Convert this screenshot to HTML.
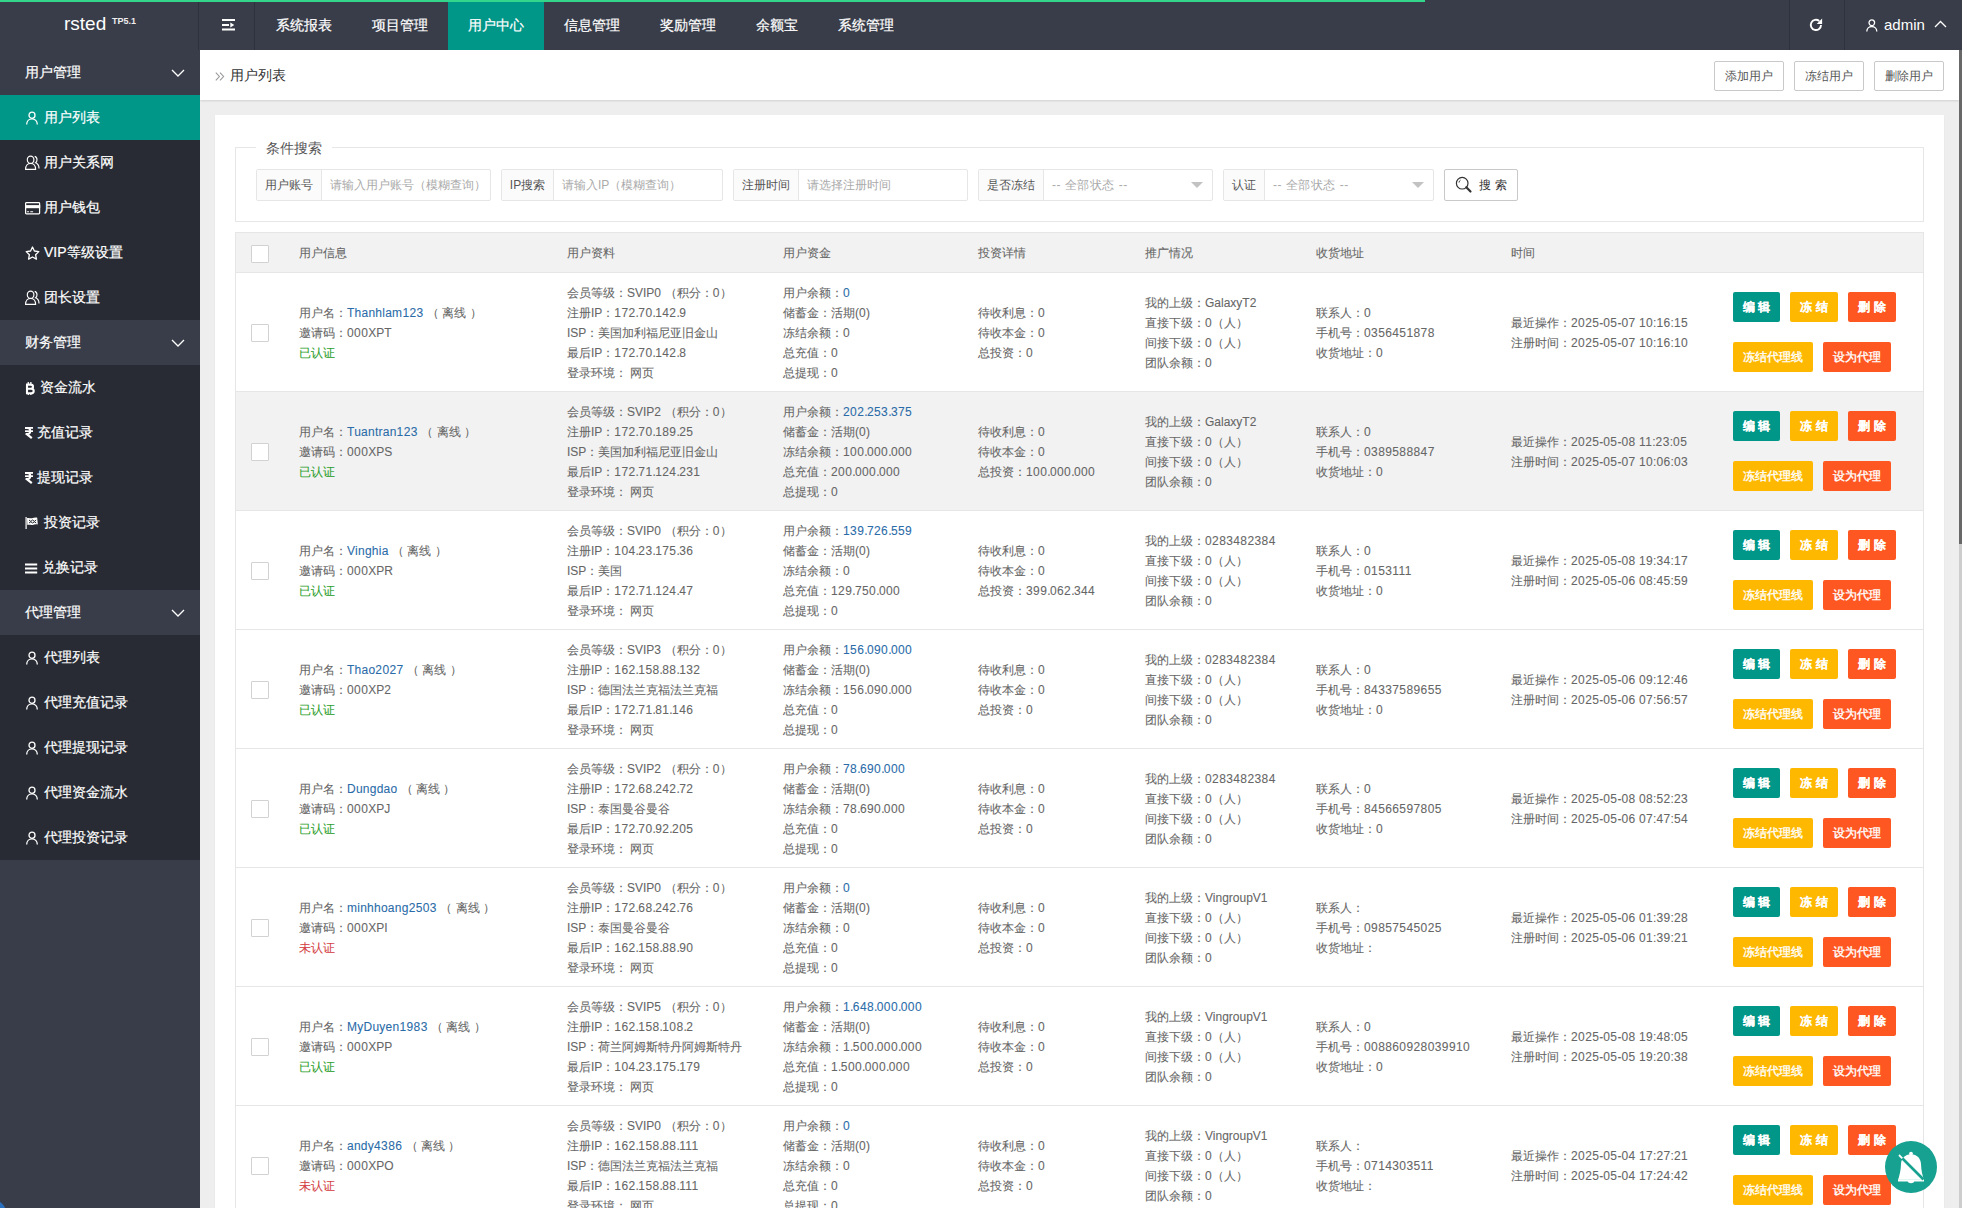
<!DOCTYPE html><html><head><meta charset="utf-8"><style>
*{margin:0;padding:0;box-sizing:border-box}
html,body{width:1962px;height:1208px;overflow:hidden;background:#eeeeee;font-family:"Liberation Sans",sans-serif;}
.side,.nav{-webkit-text-stroke:0.2px currentColor}
td,th{-webkit-text-stroke:0.08px currentColor}
.hd{position:absolute;left:0;top:0;width:1962px;height:50px;background:#393D49;}
.prog{position:absolute;left:0;top:0;width:1425px;height:2px;background:#34d68b;z-index:5}
.logo{position:absolute;left:0;top:0;width:199px;height:50px;border-right:1px solid #2f323c;color:#fff;}
.logo .t{position:absolute;left:64px;top:13px;font-size:19px;letter-spacing:0px;font-family:"Liberation Sans",sans-serif}
.logo sup{position:absolute;left:112px;top:16px;font-size:9px;font-weight:bold;color:#eee}
.menu{position:absolute;left:200px;top:0;width:55px;height:50px;border-right:1px solid #2f323c}
.menu svg{position:absolute;left:22px;top:19px}
.nav{position:absolute;left:256px;top:0;height:50px;}
.nav span{float:left;height:50px;line-height:50px;padding:0 20px;color:#fff;font-size:14px}
.nav span.on{background:#009688}
.hr1{position:absolute;left:1789px;top:0;width:56px;height:50px;border-left:1px solid #2f323c;border-right:1px solid #2f323c}
.hr1 svg{position:absolute;left:19px;top:18px}
.adm{position:absolute;left:1866px;top:0;height:50px;color:#fff;font-size:15px;line-height:50px}
.adm svg.u{position:absolute;left:0;top:18.5px}
.adm .n{position:absolute;left:18px;top:0}
.adm svg.c{position:absolute;left:68px;top:20px}
.side{position:absolute;left:0;top:50px;width:200px;height:1158px;background:#393D49}
.sg{position:relative;height:45px;line-height:45px;background:#393D49;color:#fff;font-size:14px;padding-left:25px}
.sg .chev{position:absolute;left:171px;top:19px}
.si{position:relative;height:45px;line-height:45px;background:#282B33;color:#fff;font-size:14px;}
.si.act{background:#009688}
.si .ic{position:absolute;left:25px;top:15px}
.si .gly{top:0;left:25px;line-height:45px;color:#fff}
.si .st{position:absolute;left:44px;top:0}
.main{position:absolute;left:200px;top:50px;width:1759px;height:1158px;background:#eeeeee;overflow:hidden}
.sub{position:absolute;left:0;top:0;width:1759px;height:50px;background:#fff;box-shadow:0 1px 2px rgba(0,0,0,.12)}
.crumb{position:absolute;left:30px;top:0;line-height:50px;font-size:14px;color:#333}
.crumb i{font-style:normal;color:#999;font-size:13px;margin-right:3px}
.tb{position:absolute;top:11px;height:30px;width:70px;border:1px solid #c9c9c9;border-radius:2px;background:#fff;color:#555;font-size:12px;line-height:28px;text-align:center}
.card{position:absolute;left:15px;top:65px;width:1729px;height:1200px;background:#fff;box-shadow:0 1px 2px rgba(0,0,0,.05)}
.fs{position:absolute;left:20px;top:32px;width:1689px;height:75px;border:1px solid #e6e6e6;border-bottom:1px solid #e6e6e6}
.lg{position:absolute;left:20px;top:-10px;padding:0 10px;background:#fff;font-size:14px;color:#555;line-height:20px}
.grp{position:absolute;top:21px;height:32px;border:1px solid #e6e6e6;border-radius:2px;background:#fff}
.grp .l{position:absolute;left:0;top:0;height:30px;line-height:30px;background:#fbfbfb;border-right:1px solid #e6e6e6;color:#555;font-size:12px;text-align:center}
.grp .p{position:absolute;top:0;height:30px;line-height:30px;color:#aaa;font-size:12px}
.grp .p.sl{letter-spacing:0.5px}
.grp .tri{position:absolute;top:12px;width:0;height:0;border-left:6px solid transparent;border-right:6px solid transparent;border-top:6px solid #c2c2c2}
.sbtn{position:absolute;top:21px;left:1208px;width:74px;height:32px;border:1px solid #c9c9c9;border-radius:2px;background:#fff}
.sbtn svg{position:absolute;left:10px;top:6px}
.sbtn span{position:absolute;left:34px;top:0;line-height:30px;font-size:12px;color:#333;letter-spacing:4px}
table{position:absolute;left:20px;top:117px;width:1689px;border-collapse:separate;border-spacing:0;table-layout:fixed;border:1px solid #e6e6e6;font-size:12px;color:#666}
th{height:40px;background:#f2f2f2;text-align:left;font-weight:normal;color:#666;padding:1px 15px 0;border-bottom:1px solid #e6e6e6}
td{height:119px;padding:10px 15px 8px;line-height:20px;border-bottom:1px solid #e6e6e6;vertical-align:middle;white-space:nowrap;overflow:visible}
tr.hv td{background:#f2f2f2}
td.c0,td.c8{padding:9px 15px}
.cb{display:block;position:relative;top:1px;width:18px;height:18px;border:1px solid #d2d2d2;border-radius:1px;background:#fff}
.lk{color:#2a6ba8}
.d{letter-spacing:0.4px}
.dt{letter-spacing:-0.6px}
.nm{letter-spacing:0.25px}
.ok{color:#2b9e2b}
.no{color:#d43f45}
.b{display:inline-block;height:30px;line-height:31px;padding:0 10px;color:#fff;font-size:12px;border-radius:2px;margin-right:10px;vertical-align:top}
.bb{font-weight:bold;padding:0;text-align:center}
.bg{background:#009688}.by{background:#FFB800}.bd{background:#FF5722}
.br1{height:30px}
.br2{height:30px;margin-top:20px}
.br2 .b{-webkit-text-stroke:0.35px #fff}
.sb{position:absolute;left:1959px;top:50px;width:3px;height:1158px;background:#cdcdcd}
.sbt{position:absolute;left:1959px;top:50px;width:3px;height:494px;background:#686868}
.fab{position:absolute;left:1885px;top:1141px;width:52px;height:52px;border-radius:50%;background:#16a190}
</style></head><body>
<div class="hd">
<div class="logo"><span class="t">rsted</span><sup>TP5.1</sup></div>
<div class="menu"><svg width="13" height="12" viewBox="0 0 13 12"><rect x="0" y="0" width="13" height="2" fill="#fff"/><rect x="0" y="5" width="7" height="2" fill="#fff"/><path d="M8.3 3.6l4 2.4-4 2.4z" fill="#fff"/><rect x="0" y="9.5" width="13" height="2" fill="#fff"/></svg></div>
<div class="nav"><span>系统报表</span><span>项目管理</span><span class="on">用户中心</span><span>信息管理</span><span>奖励管理</span><span>余额宝</span><span>系统管理</span></div>
<div class="hr1"><svg width="15" height="15" viewBox="0 0 15 15"><path d="M12 6.9A5.1 5.1 0 1 1 10.2 3" fill="none" stroke="#fff" stroke-width="1.9"/><path d="M13.1 0.6V5.9H7.7z" fill="#fff"/></svg></div>
<div class="adm"><svg class="u" width="12" height="13" viewBox="0 0 12 13"><ellipse cx="5.8" cy="3.8" rx="2.8" ry="2.9" fill="none" stroke="#fff" stroke-width="1.3"/><path d="M0.8 12.6c0-3 2.2-5.1 5-5.1s5 2.1 5 5.1" fill="none" stroke="#fff" stroke-width="1.3"/></svg><span class="n">admin</span><svg class="c" width="13" height="8" viewBox="0 0 13 8"><path d="M1 7l5.5-5.5L12 7" fill="none" stroke="#fff" stroke-width="1.3"/></svg></div>
<div class="prog"></div>
</div>
<div class="side"><div class="sg">用户管理<svg class="chev" width="14" height="8" viewBox="0 0 14 8"><path d="M1 1l6 6 6-6" fill="none" stroke="#fff" stroke-width="1.3"/></svg></div>
<div class="si act"><svg class="ic" style="top:16px" width="14" height="14" viewBox="0 0 14 14"><ellipse cx="7" cy="4.2" rx="3" ry="3.1" fill="none" stroke="#fff" stroke-width="1.3"/><path d="M1.7 13.4c0-3.3 2.3-5.6 5.3-5.6s5.3 2.3 5.3 5.6" fill="none" stroke="#fff" stroke-width="1.3"/></svg><span class="st" style="left:44px">用户列表</span></div>
<div class="si"><svg class="ic" style="top:15px" width="15" height="15" viewBox="0 0 15 15"><ellipse cx="5.6" cy="4.8" rx="3.3" ry="3.7" fill="none" stroke="#fff" stroke-width="1.15"/><path d="M0.6 14.3c0-3.6 2.2-6 5-6s5 2.4 5 6z" fill="none" stroke="#fff" stroke-width="1.15"/><path d="M9.7 1.4c1.4.4 2.3 1.8 2.3 3.4 0 1.3-.5 2.4-1.4 3 1.9.8 3.4 3 3.4 5.6" fill="none" stroke="#fff" stroke-width="1.15"/></svg><span class="st" style="left:44px">用户关系网</span></div>
<div class="si"><svg class="ic" style="top:16.5px" width="16" height="13" viewBox="0 0 16 13"><rect x="0.6" y="0.6" width="14" height="11.2" rx="0.8" fill="none" stroke="#fff" stroke-width="1.25"/><rect x="0" y="3.1" width="15.2" height="3.1" fill="#fff"/><rect x="1.9" y="9.2" width="2.2" height="1.1" rx="0.5" fill="#fff"/><rect x="5.1" y="9.2" width="3.1" height="1.1" rx="0.5" fill="#fff"/></svg><span class="st" style="left:44px">用户钱包</span></div>
<div class="si"><svg class="ic" style="top:15.5px" width="15" height="14" viewBox="0 0 15 14"><path d="M7.5 1l1.9 4 4.4.6-3.2 3.1.8 4.4-3.9-2.1-3.9 2.1.8-4.4L1.2 5.6l4.4-.6z" fill="none" stroke="#fff" stroke-width="1.3" stroke-linejoin="round"/></svg><span class="st" style="left:44px">VIP等级设置</span></div>
<div class="si"><svg class="ic" style="top:15px" width="15" height="15" viewBox="0 0 15 15"><ellipse cx="5.6" cy="4.8" rx="3.3" ry="3.7" fill="none" stroke="#fff" stroke-width="1.15"/><path d="M0.6 14.3c0-3.6 2.2-6 5-6s5 2.4 5 6z" fill="none" stroke="#fff" stroke-width="1.15"/><path d="M9.7 1.4c1.4.4 2.3 1.8 2.3 3.4 0 1.3-.5 2.4-1.4 3 1.9.8 3.4 3 3.4 5.6" fill="none" stroke="#fff" stroke-width="1.15"/></svg><span class="st" style="left:44px">团长设置</span></div>
<div class="sg">财务管理<svg class="chev" width="14" height="8" viewBox="0 0 14 8"><path d="M1 1l6 6 6-6" fill="none" stroke="#fff" stroke-width="1.3"/></svg></div>
<div class="si"><svg class="ic" style="top:16.5px" width="11" height="14" viewBox="0 0 11 14"><path d="M2 2.6v8.8M1 2.6h4.6c1.5 0 2.4.9 2.4 2.1s-.9 2.1-2.4 2.1H2M2 6.8h4c1.7 0 2.7.9 2.7 2.2s-1 2.3-2.7 2.3H1" fill="none" stroke="#fff" stroke-width="2.1"/><rect x="2.6" y="0" width="1.3" height="2" fill="#fff"/><rect x="5.2" y="0" width="1.3" height="2" fill="#fff"/><rect x="2.6" y="11" width="1.3" height="2" fill="#fff"/><rect x="5.2" y="11" width="1.3" height="2" fill="#fff"/></svg><span class="st" style="left:40px">资金流水</span></div>
<div class="si"><svg class="ic" style="top:17px" width="9" height="12" viewBox="0 0 9 12"><rect x="0" y="0" width="8" height="1.8" fill="#fff"/><rect x="0" y="3.3" width="8" height="1.7" fill="#fff"/><path d="M0 1h2.3c1.9 0 3 1.1 3 2.9s-1.1 3-3 3H0.6" fill="none" stroke="#fff" stroke-width="1.9"/><path d="M1.2 6.6l5.6 4.5" stroke="#fff" stroke-width="2.2"/></svg><span class="st" style="left:37px">充值记录</span></div>
<div class="si"><svg class="ic" style="top:17px" width="9" height="12" viewBox="0 0 9 12"><rect x="0" y="0" width="8" height="1.8" fill="#fff"/><rect x="0" y="3.3" width="8" height="1.7" fill="#fff"/><path d="M0 1h2.3c1.9 0 3 1.1 3 2.9s-1.1 3-3 3H0.6" fill="none" stroke="#fff" stroke-width="1.9"/><path d="M1.2 6.6l5.6 4.5" stroke="#fff" stroke-width="2.2"/></svg><span class="st" style="left:37px">提现记录</span></div>
<div class="si"><svg class="ic" style="top:16.5px" width="15" height="13" viewBox="0 0 15 13"><rect x="0.5" y="0" width="1.2" height="12" fill="#fff"/><path d="M2 1.2c1.6-.8 3.3.3 5 0s3.4-.9 5.2-.4l.6 6.8c-1.8-.5-3.5-.1-5.2.3s-3.4-.6-5.2.2z" fill="#fff"/><path d="M4 3l1.8 1.4L7.6 3l1.8 1.4L11.2 3M4 6l1.8-1.2L7.6 6l1.8-1.2L11.2 6" stroke="#282B33" stroke-width="1" fill="none"/></svg><span class="st" style="left:44px">投资记录</span></div>
<div class="si"><svg class="ic" style="top:17.5px" width="13" height="11" viewBox="0 0 13 11"><rect x="0" y="0.5" width="12.2" height="2" fill="#fff"/><rect x="0" y="4.5" width="12.2" height="2" fill="#fff"/><rect x="0" y="8.5" width="12.2" height="2" fill="#fff"/></svg><span class="st" style="left:42px">兑换记录</span></div>
<div class="sg">代理管理<svg class="chev" width="14" height="8" viewBox="0 0 14 8"><path d="M1 1l6 6 6-6" fill="none" stroke="#fff" stroke-width="1.3"/></svg></div>
<div class="si"><svg class="ic" style="top:16px" width="14" height="14" viewBox="0 0 14 14"><ellipse cx="7" cy="4.2" rx="3" ry="3.1" fill="none" stroke="#fff" stroke-width="1.3"/><path d="M1.7 13.4c0-3.3 2.3-5.6 5.3-5.6s5.3 2.3 5.3 5.6" fill="none" stroke="#fff" stroke-width="1.3"/></svg><span class="st" style="left:44px">代理列表</span></div>
<div class="si"><svg class="ic" style="top:16px" width="14" height="14" viewBox="0 0 14 14"><ellipse cx="7" cy="4.2" rx="3" ry="3.1" fill="none" stroke="#fff" stroke-width="1.3"/><path d="M1.7 13.4c0-3.3 2.3-5.6 5.3-5.6s5.3 2.3 5.3 5.6" fill="none" stroke="#fff" stroke-width="1.3"/></svg><span class="st" style="left:44px">代理充值记录</span></div>
<div class="si"><svg class="ic" style="top:16px" width="14" height="14" viewBox="0 0 14 14"><ellipse cx="7" cy="4.2" rx="3" ry="3.1" fill="none" stroke="#fff" stroke-width="1.3"/><path d="M1.7 13.4c0-3.3 2.3-5.6 5.3-5.6s5.3 2.3 5.3 5.6" fill="none" stroke="#fff" stroke-width="1.3"/></svg><span class="st" style="left:44px">代理提现记录</span></div>
<div class="si"><svg class="ic" style="top:16px" width="14" height="14" viewBox="0 0 14 14"><ellipse cx="7" cy="4.2" rx="3" ry="3.1" fill="none" stroke="#fff" stroke-width="1.3"/><path d="M1.7 13.4c0-3.3 2.3-5.6 5.3-5.6s5.3 2.3 5.3 5.6" fill="none" stroke="#fff" stroke-width="1.3"/></svg><span class="st" style="left:44px">代理资金流水</span></div>
<div class="si"><svg class="ic" style="top:16px" width="14" height="14" viewBox="0 0 14 14"><ellipse cx="7" cy="4.2" rx="3" ry="3.1" fill="none" stroke="#fff" stroke-width="1.3"/><path d="M1.7 13.4c0-3.3 2.3-5.6 5.3-5.6s5.3 2.3 5.3 5.6" fill="none" stroke="#fff" stroke-width="1.3"/></svg><span class="st" style="left:44px">代理投资记录</span></div></div>
<div class="main">
<div class="sub"><svg style="position:absolute;left:15px;top:22px" width="10" height="9" viewBox="0 0 10 9"><path d="M0.8 0.6l3.6 3.9-3.6 3.9M5 0.6l3.6 3.9L5 8.4" fill="none" stroke="#999" stroke-width="1.1"/></svg><div class="crumb">用户列表</div><div class="tb" style="left:1514px">添加用户</div><div class="tb" style="left:1594px">冻结用户</div><div class="tb" style="left:1674px">删除用户</div></div>
<div class="card">
<div class="fs"><div class="lg">条件搜索</div><div class="grp" style="left:20px;width:235px"><div class="l" style="width:65px">用户账号</div><div class="p" style="left:73px">请输入用户账号（模糊查询）</div></div><div class="grp" style="left:265px;width:222px"><div class="l" style="width:52px">IP搜索</div><div class="p" style="left:60px">请输入IP（模糊查询）</div></div><div class="grp" style="left:497px;width:235px"><div class="l" style="width:65px">注册时间</div><div class="p" style="left:73px">请选择注册时间</div></div><div class="grp" style="left:742px;width:235px"><div class="l" style="width:65px">是否冻结</div><div class="p sl" style="left:73px">-- 全部状态 --</div><i class="tri" style="left:212px"></i></div><div class="grp" style="left:987px;width:211px"><div class="l" style="width:41px">认证</div><div class="p sl" style="left:49px">-- 全部状态 --</div><i class="tri" style="left:188px"></i></div><div class="sbtn"><svg width="18" height="18" viewBox="0 0 18 18"><circle cx="7.2" cy="7.2" r="5.8" fill="none" stroke="#333" stroke-width="1.2"/><path d="M4 6.5a3 3 0 0 1 1.5-2.3" fill="none" stroke="#333" stroke-width="1"/><path d="M11.3 11.3l4.2 4.2" stroke="#333" stroke-width="2.2" stroke-linecap="round"/></svg><span>搜索</span></div></div>
<table><colgroup><col style="width:48px"><col style="width:268px"><col style="width:216px"><col style="width:195px"><col style="width:167px"><col style="width:171px"><col style="width:195px"><col style="width:222px"><col></colgroup><thead><tr><th><i class="cb"></i></th><th>用户信息</th><th>用户资料</th><th>用户资金</th><th>投资详情</th><th>推广情况</th><th>收货地址</th><th>时间</th><th></th></tr></thead><tbody><tr>
<td class="c0"><i class="cb"></i></td>
<td class="c1">用户名：<span class="lk nm">Thanhlam<span class="d">123</span></span> <span class="off">（ 离线 ）</span><br>邀请码：<span class="d">000</span>XPT<br><span class="ok">已认证</span></td>
<td class="c2">会员等级：SVIP<span class="d">0</span> （积分：<span class="d">0</span>）<br>注册IP：<span class="d">172</span><span class="dt">.</span><span class="d">70</span><span class="dt">.</span><span class="d">142</span><span class="dt">.</span><span class="d">9</span><br>ISP：美国加利福尼亚旧金山<br>最后IP：<span class="d">172</span><span class="dt">.</span><span class="d">70</span><span class="dt">.</span><span class="d">142</span><span class="dt">.</span><span class="d">8</span><br>登录环境： 网页</td>
<td class="c3">用户余额：<span class="lk"><span class="d">0</span></span><br>储蓄金：活期(<span class="d">0</span>)<br>冻结余额：<span class="d">0</span><br>总充值：<span class="d">0</span><br>总提现：<span class="d">0</span></td>
<td class="c4">待收利息：<span class="d">0</span><br>待收本金：<span class="d">0</span><br>总投资：<span class="d">0</span></td>
<td class="c5">我的上级：GalaxyT<span class="d">2</span><br>直接下级：<span class="d">0</span>（人）<br>间接下级：<span class="d">0</span>（人）<br>团队余额：<span class="d">0</span></td>
<td class="c6">联系人：<span class="d">0</span><br>手机号：<span class="d">0356451878</span><br>收货地址：<span class="d">0</span></td>
<td class="c7">最近操作：<span class="d">2025</span>-<span class="d">05</span>-<span class="d">07</span> <span class="d">10</span>:<span class="d">16</span>:<span class="d">15</span><br>注册时间：<span class="d">2025</span>-<span class="d">05</span>-<span class="d">07</span> <span class="d">10</span>:<span class="d">16</span>:<span class="d">10</span></td>
<td class="c8"><div class="br1"><span class="b bg bb" style="width:47px">编 辑</span><span class="b by bb" style="width:48px">冻 结</span><span class="b bd bb" style="width:48px">删 除</span></div><div class="br2"><span class="b by">冻结代理线</span><span class="b bd">设为代理</span></div></td>
</tr><tr class="hv">
<td class="c0"><i class="cb"></i></td>
<td class="c1">用户名：<span class="lk nm">Tuantran<span class="d">123</span></span> <span class="off">（ 离线 ）</span><br>邀请码：<span class="d">000</span>XPS<br><span class="ok">已认证</span></td>
<td class="c2">会员等级：SVIP<span class="d">2</span> （积分：<span class="d">0</span>）<br>注册IP：<span class="d">172</span><span class="dt">.</span><span class="d">70</span><span class="dt">.</span><span class="d">189</span><span class="dt">.</span><span class="d">25</span><br>ISP：美国加利福尼亚旧金山<br>最后IP：<span class="d">172</span><span class="dt">.</span><span class="d">71</span><span class="dt">.</span><span class="d">124</span><span class="dt">.</span><span class="d">231</span><br>登录环境： 网页</td>
<td class="c3">用户余额：<span class="lk"><span class="d">202</span><span class="dt">.</span><span class="d">253</span><span class="dt">.</span><span class="d">375</span></span><br>储蓄金：活期(<span class="d">0</span>)<br>冻结余额：<span class="d">100</span><span class="dt">.</span><span class="d">000</span><span class="dt">.</span><span class="d">000</span><br>总充值：<span class="d">200</span><span class="dt">.</span><span class="d">000</span><span class="dt">.</span><span class="d">000</span><br>总提现：<span class="d">0</span></td>
<td class="c4">待收利息：<span class="d">0</span><br>待收本金：<span class="d">0</span><br>总投资：<span class="d">100</span><span class="dt">.</span><span class="d">000</span><span class="dt">.</span><span class="d">000</span></td>
<td class="c5">我的上级：GalaxyT<span class="d">2</span><br>直接下级：<span class="d">0</span>（人）<br>间接下级：<span class="d">0</span>（人）<br>团队余额：<span class="d">0</span></td>
<td class="c6">联系人：<span class="d">0</span><br>手机号：<span class="d">0389588847</span><br>收货地址：<span class="d">0</span></td>
<td class="c7">最近操作：<span class="d">2025</span>-<span class="d">05</span>-<span class="d">08</span> <span class="d">11</span>:<span class="d">23</span>:<span class="d">05</span><br>注册时间：<span class="d">2025</span>-<span class="d">05</span>-<span class="d">07</span> <span class="d">10</span>:<span class="d">06</span>:<span class="d">03</span></td>
<td class="c8"><div class="br1"><span class="b bg bb" style="width:47px">编 辑</span><span class="b by bb" style="width:48px">冻 结</span><span class="b bd bb" style="width:48px">删 除</span></div><div class="br2"><span class="b by">冻结代理线</span><span class="b bd">设为代理</span></div></td>
</tr><tr>
<td class="c0"><i class="cb"></i></td>
<td class="c1">用户名：<span class="lk nm">Vinghia</span> <span class="off">（ 离线 ）</span><br>邀请码：<span class="d">000</span>XPR<br><span class="ok">已认证</span></td>
<td class="c2">会员等级：SVIP<span class="d">0</span> （积分：<span class="d">0</span>）<br>注册IP：<span class="d">104</span><span class="dt">.</span><span class="d">23</span><span class="dt">.</span><span class="d">175</span><span class="dt">.</span><span class="d">36</span><br>ISP：美国<br>最后IP：<span class="d">172</span><span class="dt">.</span><span class="d">71</span><span class="dt">.</span><span class="d">124</span><span class="dt">.</span><span class="d">47</span><br>登录环境： 网页</td>
<td class="c3">用户余额：<span class="lk"><span class="d">139</span><span class="dt">.</span><span class="d">726</span><span class="dt">.</span><span class="d">559</span></span><br>储蓄金：活期(<span class="d">0</span>)<br>冻结余额：<span class="d">0</span><br>总充值：<span class="d">129</span><span class="dt">.</span><span class="d">750</span><span class="dt">.</span><span class="d">000</span><br>总提现：<span class="d">0</span></td>
<td class="c4">待收利息：<span class="d">0</span><br>待收本金：<span class="d">0</span><br>总投资：<span class="d">399</span><span class="dt">.</span><span class="d">062</span><span class="dt">.</span><span class="d">344</span></td>
<td class="c5">我的上级：<span class="d">0283482384</span><br>直接下级：<span class="d">0</span>（人）<br>间接下级：<span class="d">0</span>（人）<br>团队余额：<span class="d">0</span></td>
<td class="c6">联系人：<span class="d">0</span><br>手机号：<span class="d">0153111</span><br>收货地址：<span class="d">0</span></td>
<td class="c7">最近操作：<span class="d">2025</span>-<span class="d">05</span>-<span class="d">08</span> <span class="d">19</span>:<span class="d">34</span>:<span class="d">17</span><br>注册时间：<span class="d">2025</span>-<span class="d">05</span>-<span class="d">06</span> <span class="d">08</span>:<span class="d">45</span>:<span class="d">59</span></td>
<td class="c8"><div class="br1"><span class="b bg bb" style="width:47px">编 辑</span><span class="b by bb" style="width:48px">冻 结</span><span class="b bd bb" style="width:48px">删 除</span></div><div class="br2"><span class="b by">冻结代理线</span><span class="b bd">设为代理</span></div></td>
</tr><tr>
<td class="c0"><i class="cb"></i></td>
<td class="c1">用户名：<span class="lk nm">Thao<span class="d">2027</span></span> <span class="off">（ 离线 ）</span><br>邀请码：<span class="d">000</span>XP<span class="d">2</span><br><span class="ok">已认证</span></td>
<td class="c2">会员等级：SVIP<span class="d">3</span> （积分：<span class="d">0</span>）<br>注册IP：<span class="d">162</span><span class="dt">.</span><span class="d">158</span><span class="dt">.</span><span class="d">88</span><span class="dt">.</span><span class="d">132</span><br>ISP：德国法兰克福法兰克福<br>最后IP：<span class="d">172</span><span class="dt">.</span><span class="d">71</span><span class="dt">.</span><span class="d">81</span><span class="dt">.</span><span class="d">146</span><br>登录环境： 网页</td>
<td class="c3">用户余额：<span class="lk"><span class="d">156</span><span class="dt">.</span><span class="d">090</span><span class="dt">.</span><span class="d">000</span></span><br>储蓄金：活期(<span class="d">0</span>)<br>冻结余额：<span class="d">156</span><span class="dt">.</span><span class="d">090</span><span class="dt">.</span><span class="d">000</span><br>总充值：<span class="d">0</span><br>总提现：<span class="d">0</span></td>
<td class="c4">待收利息：<span class="d">0</span><br>待收本金：<span class="d">0</span><br>总投资：<span class="d">0</span></td>
<td class="c5">我的上级：<span class="d">0283482384</span><br>直接下级：<span class="d">0</span>（人）<br>间接下级：<span class="d">0</span>（人）<br>团队余额：<span class="d">0</span></td>
<td class="c6">联系人：<span class="d">0</span><br>手机号：<span class="d">84337589655</span><br>收货地址：<span class="d">0</span></td>
<td class="c7">最近操作：<span class="d">2025</span>-<span class="d">05</span>-<span class="d">06</span> <span class="d">09</span>:<span class="d">12</span>:<span class="d">46</span><br>注册时间：<span class="d">2025</span>-<span class="d">05</span>-<span class="d">06</span> <span class="d">07</span>:<span class="d">56</span>:<span class="d">57</span></td>
<td class="c8"><div class="br1"><span class="b bg bb" style="width:47px">编 辑</span><span class="b by bb" style="width:48px">冻 结</span><span class="b bd bb" style="width:48px">删 除</span></div><div class="br2"><span class="b by">冻结代理线</span><span class="b bd">设为代理</span></div></td>
</tr><tr>
<td class="c0"><i class="cb"></i></td>
<td class="c1">用户名：<span class="lk nm">Dungdao</span> <span class="off">（ 离线 ）</span><br>邀请码：<span class="d">000</span>XPJ<br><span class="ok">已认证</span></td>
<td class="c2">会员等级：SVIP<span class="d">2</span> （积分：<span class="d">0</span>）<br>注册IP：<span class="d">172</span><span class="dt">.</span><span class="d">68</span><span class="dt">.</span><span class="d">242</span><span class="dt">.</span><span class="d">72</span><br>ISP：泰国曼谷曼谷<br>最后IP：<span class="d">172</span><span class="dt">.</span><span class="d">70</span><span class="dt">.</span><span class="d">92</span><span class="dt">.</span><span class="d">205</span><br>登录环境： 网页</td>
<td class="c3">用户余额：<span class="lk"><span class="d">78</span><span class="dt">.</span><span class="d">690</span><span class="dt">.</span><span class="d">000</span></span><br>储蓄金：活期(<span class="d">0</span>)<br>冻结余额：<span class="d">78</span><span class="dt">.</span><span class="d">690</span><span class="dt">.</span><span class="d">000</span><br>总充值：<span class="d">0</span><br>总提现：<span class="d">0</span></td>
<td class="c4">待收利息：<span class="d">0</span><br>待收本金：<span class="d">0</span><br>总投资：<span class="d">0</span></td>
<td class="c5">我的上级：<span class="d">0283482384</span><br>直接下级：<span class="d">0</span>（人）<br>间接下级：<span class="d">0</span>（人）<br>团队余额：<span class="d">0</span></td>
<td class="c6">联系人：<span class="d">0</span><br>手机号：<span class="d">84566597805</span><br>收货地址：<span class="d">0</span></td>
<td class="c7">最近操作：<span class="d">2025</span>-<span class="d">05</span>-<span class="d">08</span> <span class="d">08</span>:<span class="d">52</span>:<span class="d">23</span><br>注册时间：<span class="d">2025</span>-<span class="d">05</span>-<span class="d">06</span> <span class="d">07</span>:<span class="d">47</span>:<span class="d">54</span></td>
<td class="c8"><div class="br1"><span class="b bg bb" style="width:47px">编 辑</span><span class="b by bb" style="width:48px">冻 结</span><span class="b bd bb" style="width:48px">删 除</span></div><div class="br2"><span class="b by">冻结代理线</span><span class="b bd">设为代理</span></div></td>
</tr><tr>
<td class="c0"><i class="cb"></i></td>
<td class="c1">用户名：<span class="lk nm">minhhoang<span class="d">2503</span></span> <span class="off">（ 离线 ）</span><br>邀请码：<span class="d">000</span>XPI<br><span class="no">未认证</span></td>
<td class="c2">会员等级：SVIP<span class="d">0</span> （积分：<span class="d">0</span>）<br>注册IP：<span class="d">172</span><span class="dt">.</span><span class="d">68</span><span class="dt">.</span><span class="d">242</span><span class="dt">.</span><span class="d">76</span><br>ISP：泰国曼谷曼谷<br>最后IP：<span class="d">162</span><span class="dt">.</span><span class="d">158</span><span class="dt">.</span><span class="d">88</span><span class="dt">.</span><span class="d">90</span><br>登录环境： 网页</td>
<td class="c3">用户余额：<span class="lk"><span class="d">0</span></span><br>储蓄金：活期(<span class="d">0</span>)<br>冻结余额：<span class="d">0</span><br>总充值：<span class="d">0</span><br>总提现：<span class="d">0</span></td>
<td class="c4">待收利息：<span class="d">0</span><br>待收本金：<span class="d">0</span><br>总投资：<span class="d">0</span></td>
<td class="c5">我的上级：VingroupV<span class="d">1</span><br>直接下级：<span class="d">0</span>（人）<br>间接下级：<span class="d">0</span>（人）<br>团队余额：<span class="d">0</span></td>
<td class="c6">联系人：<br>手机号：<span class="d">09857545025</span><br>收货地址：</td>
<td class="c7">最近操作：<span class="d">2025</span>-<span class="d">05</span>-<span class="d">06</span> <span class="d">01</span>:<span class="d">39</span>:<span class="d">28</span><br>注册时间：<span class="d">2025</span>-<span class="d">05</span>-<span class="d">06</span> <span class="d">01</span>:<span class="d">39</span>:<span class="d">21</span></td>
<td class="c8"><div class="br1"><span class="b bg bb" style="width:47px">编 辑</span><span class="b by bb" style="width:48px">冻 结</span><span class="b bd bb" style="width:48px">删 除</span></div><div class="br2"><span class="b by">冻结代理线</span><span class="b bd">设为代理</span></div></td>
</tr><tr>
<td class="c0"><i class="cb"></i></td>
<td class="c1">用户名：<span class="lk nm">MyDuyen<span class="d">1983</span></span> <span class="off">（ 离线 ）</span><br>邀请码：<span class="d">000</span>XPP<br><span class="ok">已认证</span></td>
<td class="c2">会员等级：SVIP<span class="d">5</span> （积分：<span class="d">0</span>）<br>注册IP：<span class="d">162</span><span class="dt">.</span><span class="d">158</span><span class="dt">.</span><span class="d">108</span><span class="dt">.</span><span class="d">2</span><br>ISP：荷兰阿姆斯特丹阿姆斯特丹<br>最后IP：<span class="d">104</span><span class="dt">.</span><span class="d">23</span><span class="dt">.</span><span class="d">175</span><span class="dt">.</span><span class="d">179</span><br>登录环境： 网页</td>
<td class="c3">用户余额：<span class="lk"><span class="d">1</span><span class="dt">.</span><span class="d">648</span><span class="dt">.</span><span class="d">000</span><span class="dt">.</span><span class="d">000</span></span><br>储蓄金：活期(<span class="d">0</span>)<br>冻结余额：<span class="d">1</span><span class="dt">.</span><span class="d">500</span><span class="dt">.</span><span class="d">000</span><span class="dt">.</span><span class="d">000</span><br>总充值：<span class="d">1</span><span class="dt">.</span><span class="d">500</span><span class="dt">.</span><span class="d">000</span><span class="dt">.</span><span class="d">000</span><br>总提现：<span class="d">0</span></td>
<td class="c4">待收利息：<span class="d">0</span><br>待收本金：<span class="d">0</span><br>总投资：<span class="d">0</span></td>
<td class="c5">我的上级：VingroupV<span class="d">1</span><br>直接下级：<span class="d">0</span>（人）<br>间接下级：<span class="d">0</span>（人）<br>团队余额：<span class="d">0</span></td>
<td class="c6">联系人：<span class="d">0</span><br>手机号：<span class="d">008860928039910</span><br>收货地址：<span class="d">0</span></td>
<td class="c7">最近操作：<span class="d">2025</span>-<span class="d">05</span>-<span class="d">08</span> <span class="d">19</span>:<span class="d">48</span>:<span class="d">05</span><br>注册时间：<span class="d">2025</span>-<span class="d">05</span>-<span class="d">05</span> <span class="d">19</span>:<span class="d">20</span>:<span class="d">38</span></td>
<td class="c8"><div class="br1"><span class="b bg bb" style="width:47px">编 辑</span><span class="b by bb" style="width:48px">冻 结</span><span class="b bd bb" style="width:48px">删 除</span></div><div class="br2"><span class="b by">冻结代理线</span><span class="b bd">设为代理</span></div></td>
</tr><tr>
<td class="c0"><i class="cb"></i></td>
<td class="c1">用户名：<span class="lk nm">andy<span class="d">4386</span></span> <span class="off">（ 离线 ）</span><br>邀请码：<span class="d">000</span>XPO<br><span class="no">未认证</span></td>
<td class="c2">会员等级：SVIP<span class="d">0</span> （积分：<span class="d">0</span>）<br>注册IP：<span class="d">162</span><span class="dt">.</span><span class="d">158</span><span class="dt">.</span><span class="d">88</span><span class="dt">.</span><span class="d">111</span><br>ISP：德国法兰克福法兰克福<br>最后IP：<span class="d">162</span><span class="dt">.</span><span class="d">158</span><span class="dt">.</span><span class="d">88</span><span class="dt">.</span><span class="d">111</span><br>登录环境： 网页</td>
<td class="c3">用户余额：<span class="lk"><span class="d">0</span></span><br>储蓄金：活期(<span class="d">0</span>)<br>冻结余额：<span class="d">0</span><br>总充值：<span class="d">0</span><br>总提现：<span class="d">0</span></td>
<td class="c4">待收利息：<span class="d">0</span><br>待收本金：<span class="d">0</span><br>总投资：<span class="d">0</span></td>
<td class="c5">我的上级：VingroupV<span class="d">1</span><br>直接下级：<span class="d">0</span>（人）<br>间接下级：<span class="d">0</span>（人）<br>团队余额：<span class="d">0</span></td>
<td class="c6">联系人：<br>手机号：<span class="d">0714303511</span><br>收货地址：</td>
<td class="c7">最近操作：<span class="d">2025</span>-<span class="d">05</span>-<span class="d">04</span> <span class="d">17</span>:<span class="d">27</span>:<span class="d">21</span><br>注册时间：<span class="d">2025</span>-<span class="d">05</span>-<span class="d">04</span> <span class="d">17</span>:<span class="d">24</span>:<span class="d">42</span></td>
<td class="c8"><div class="br1"><span class="b bg bb" style="width:47px">编 辑</span><span class="b by bb" style="width:48px">冻 结</span><span class="b bd bb" style="width:48px">删 除</span></div><div class="br2"><span class="b by">冻结代理线</span><span class="b bd">设为代理</span></div></td>
</tr></tbody></table>
</div></div>
<div class="sb"></div><div class="sbt"></div><div style="position:absolute;left:-20px;top:1200px;width:26px;height:26px;border-radius:50%;background:#2b6fbf"></div>
<div class="fab"><svg width="52" height="52" viewBox="0 0 52 52"><circle cx="26" cy="12.6" r="1.9" fill="#fff"/><path d="M13.2 38.6c1.4-4.6 2.6-9.4 2.8-15.6.2-5.6 4-9.6 10-9.8 6 .2 9.8 4.2 10 9.8.2 6.2 1.4 11 2.8 15.6z" fill="#fff"/><path d="M13 38.3h26v2.3H29.3c-.5 1-1.6 1.6-3.3 1.6s-2.8-.6-3.3-1.6H13z" fill="#fff"/><path d="M16.5 16.5l22 22" stroke="#16a190" stroke-width="2.6"/><path d="M14 14l3.3 3.3" stroke="#fff" stroke-width="1.8"/></svg></div>
</body></html>
